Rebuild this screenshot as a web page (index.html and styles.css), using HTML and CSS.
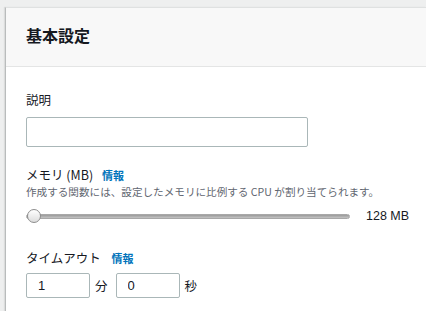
FILE: index.html
```html
<!DOCTYPE html>
<html lang="ja">
<head>
<meta charset="utf-8">
<link rel="stylesheet" href="styles.css">
</head>
<body>
<div class="panel">
  <div class="panel-header"><h2 class="title">基本設定</h2></div>
  <div class="panel-body">
    <div class="field">
      <label class="label">説明</label>
      <input class="text-input desc-input" type="text">
    </div>
    <div class="field memory">
      <div class="label">メモリ (MB) <a class="info">情報</a></div>
      <div class="hint">作成する関数には、設定したメモリに比例する CPU が割り当てられます。</div>
      <div class="slider-row">
        <input class="slider" type="range" min="128" max="3008" value="128">
        <span class="slider-value">128 MB</span>
      </div>
    </div>
    <div class="field timeout">
      <div class="label">タイムアウト <a class="info">情報</a></div>
      <div class="time-row">
        <input class="text-input small-input" type="text" value="1">
        <span class="unit">分</span>
        <input class="text-input small-input" type="text" value="0">
        <span class="unit">秒</span>
      </div>
    </div>
  </div>
</div>
</body>
</html>
```

FILE: styles.css
```css
html, body {
  margin: 0;
  padding: 0;
}
body {
  background: #eeefef;
  font-family: "Noto Sans CJK JP", "Noto Sans", sans-serif;
  color: #16191f;
  padding: 7px 0 0 5px;
  height: 311px;
  box-sizing: border-box;
  overflow: hidden;
}
.panel {
  background: #fff;
  border-top: 1px solid #dfe1e1;
  border-left: 1px solid #b9bcbc;
  box-shadow: -1px 0 1px rgba(0,0,0,0.08);
  height: 100%;
}
.panel-header {
  background: #f8f8f8;
  border-bottom: 1px solid #e4e5e5;
  height: 58px;
  display: flex;
  align-items: center;
  padding-left: 20px;
}
.title {
  margin: 0 0 4px;
  font-size: 16px;
  font-weight: 700;
  line-height: 20px;
}
.panel-body {
  padding: 24px 0 0 20px;
}
.field {
  display: flex;
  flex-direction: column;
  align-items: flex-start;
}
.label {
  font-size: 12.5px;
  line-height: 18px;
  margin-bottom: 8px;
}
.info {
  color: #0073bb;
  font-weight: 700;
  font-size: 11px;
  margin-left: 6px;
  text-decoration: none;
}
.timeout .info {
  margin-left: 8px;
}
.text-input {
  box-sizing: border-box;
  border: 1px solid #aab7b8;
  border-radius: 2px;
  font-family: "Liberation Sans", Arial, sans-serif;
  font-size: 13px;
  color: #16191f;
  background: #fff;
  outline: none;
}
.desc-input {
  width: 282px;
  height: 30px;
}
.memory {
  margin-top: 19px;
}
.memory .label {
  margin-bottom: 0;
}
.hint {
  font-size: 10.6px;
  line-height: 16px;
  color: #5f6670;
}
.slider-row {
  display: flex;
  align-items: center;
  margin-top: 8px;
  height: 16px;
}
.slider {
  -webkit-appearance: none;
  appearance: none;
  width: 324px;
  height: 5px;
  margin: 0;
  border-radius: 3px;
  background: linear-gradient(#9a9a9a, #c4c4c4);
  border: 1px solid #a8a8a8;
  box-sizing: border-box;
}
.slider::-webkit-slider-thumb {
  -webkit-appearance: none;
  appearance: none;
  width: 14px;
  height: 14px;
  border-radius: 50%;
  background: linear-gradient(#ffffff, #dcdcdc);
  border: 1px solid #8e8e8e;
  box-sizing: border-box;
}
.slider-value {
  font-family: "Liberation Sans", Arial, sans-serif;
  font-size: 12.5px;
  margin-left: 16px;
}
.timeout {
  margin-top: 25px;
}
.timeout .label {
  margin-bottom: 6px;
}
.time-row {
  display: flex;
  align-items: center;
}
.small-input {
  width: 64px;
  height: 25px;
  padding-left: 11px;
}
.unit {
  font-size: 12.5px;
  margin: 0 8px 0 5px;
}
```
